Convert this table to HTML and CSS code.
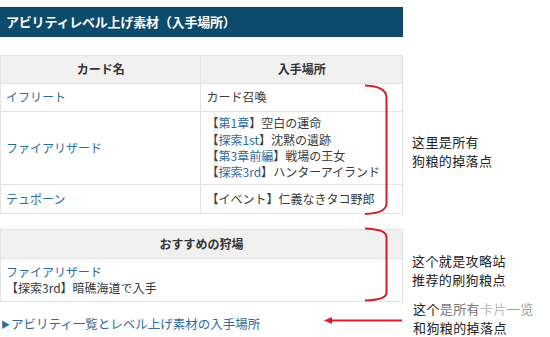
FILE: index.html
```html
<!DOCTYPE html>
<html lang="ja">
<head>
<meta charset="utf-8">
<link rel="stylesheet" href="styles.css">
</head>
<body>
<div class="page">
  <div class="topstrip"></div>
  <h2 class="title">アビリティレベル上げ素材（入手場所）</h2>

  <table class="tbl t1">
    <colgroup><col class="c1"><col class="c2"></colgroup>
    <thead>
      <tr class="hrow"><th>カード名</th><th>入手場所</th></tr>
    </thead>
    <tbody>
      <tr class="r1"><td><a>イフリート</a></td><td>カード召喚</td></tr>
      <tr class="r2"><td><a>ファイアリザード</a></td>
        <td class="multi"><span class="lk">【<a>第1章</a>】</span>空白の運命<br><span class="lk">【<a>探索1st</a>】</span>沈黙の遺跡<br><span class="lk">【<a>第3章前編</a>】</span>戦場の王女<br><span class="lk">【<a>探索3rd</a>】</span>ハンターアイランド</td></tr>
      <tr class="r3"><td><a>テュポーン</a></td><td>【イベント】仁義なきタコ野郎</td></tr>
    </tbody>
  </table>

  <table class="tbl t2">
    <thead><tr class="hrow"><th>おすすめの狩場</th></tr></thead>
    <tbody>
      <tr class="r4"><td><a>ファイアリザード</a><br>【探索3rd】暗礁海道で入手</td></tr>
    </tbody>
  </table>

  <p class="more"><a><span class="tri">▶</span>アビリティ一覧とレベル上げ素材の入手場所</a></p>

  <svg class="marks" width="550" height="337" viewBox="0 0 550 337">
    <path d="M365 85.5 C378 86 386 89 386.5 97 L386.5 204 C386 211 378 213.5 365 214" />
    <path d="M365 228.5 C378 229 386.5 231 386.5 237 L386.5 293 C386.5 298 378 300 365 300.5" />
    <path d="M330 320.5 L402 320.5" />
    <polygon points="324,320.5 332,317 332,324" />
  </svg>

  <div class="note n1">这里是所有<br>狗粮的掉落点</div>
  <div class="note n2">这个就是攻略站<br>推荐的刷狗粮点</div>
  <div class="note n3">这个<span class="fade">是所有</span><span class="fade2">卡片</span><span class="fade3">一览</span><br>和狗粮的掉落点</div>
</div>
</body>
</html>
```

FILE: styles.css
```css
* { box-sizing: border-box; }
html, body { margin: 0; padding: 0; background: #fff; }
body {
  font-family: "Noto Sans CJK JP", "Noto Sans", sans-serif;
  color: #333;
  width: 550px;
  height: 337px;
  overflow: hidden;
}
.page { position: relative; width: 550px; height: 337px; }
.topstrip { height: 7px; border-bottom: 1px solid #f2f2f2; width: 403px; }
.title {
  margin: 0;
  width: 403px;
  height: 30px;
  background: #0d4b6c;
  color: #fff;
  font-size: 13px;
  font-weight: bold;
  line-height: 30px;
  padding-left: 6px;
  letter-spacing: -0.2px;
}
.tbl {
  border-collapse: collapse;
  width: 403px;
  font-size: 12px;
  line-height: 16.4px;
}
.tbl th, .tbl td { border: 1px solid #e3e3e3; padding: 0 5px; }
.tbl th {
  background: #f0f0f0;
  font-weight: bold;
  color: #333;
  text-align: center;
  height: 28px;
}
.t1 { margin-top: 18px; }
.c1 { width: 201px; }
.c2 { width: 202px; }
.tbl td { text-align: left; vertical-align: middle; color: #3a3a3a; }
.r1 td { height: 28px; }
.r2 td { height: 73px; }
.r3 td { height: 29px; }
.t2 { margin-top: 15px; }
.t2 th { height: 29px; }
.r4 td { height: 43px; }
a { color: #2c6c9c; text-decoration: none; }
.lk { color: #3a3a3a; }
.lk a { color: #2c6c9c; }
.more {
  margin: 14px 0 0 1px;
  font-size: 12.5px;
  line-height: 16px;
}
.tri { font-size: 9px; margin-right: 1px; vertical-align: 1px; }
.marks { position: absolute; left: 0; top: 0; pointer-events: none; }
.marks path { fill: none; stroke: #cf1f2b; stroke-width: 2; }
.marks polygon { fill: #cf1f2b; }
.note {
  position: absolute;
  left: 412px;
  font-family: "Noto Sans CJK SC", sans-serif;
  font-size: 13px;
  color: #222;
  line-height: 19px;
  letter-spacing: 0.4px;
  white-space: nowrap;
}
.n1 { top: 132px; }
.n2 { top: 251px; }
.n3 { top: 299px; left: 413px; }
.fade { color: #777; }
.fade2 { color: #bbb; }
.fade3 { color: #999; }
```
